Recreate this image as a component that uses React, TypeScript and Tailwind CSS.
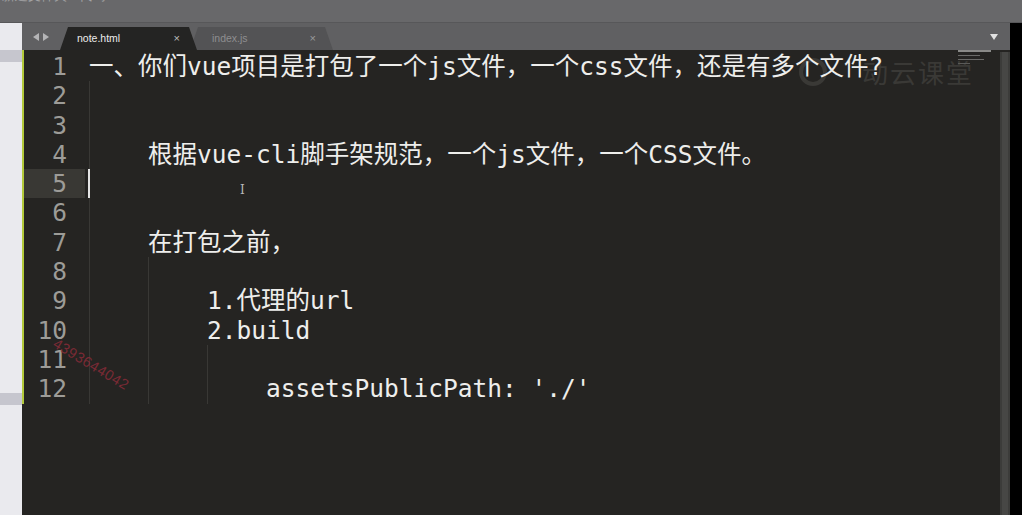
import React from "react";

type Line = { n: number; guides: number; text: string };

const lines: Line[] = [
  { n: 1, guides: 0, text: "一、你们vue项目是打包了一个js文件，一个css文件，还是有多个文件?" },
  { n: 2, guides: 1, text: "" },
  { n: 3, guides: 1, text: "" },
  { n: 4, guides: 1, text: "根据vue-cli脚手架规范，一个js文件，一个CSS文件。" },
  { n: 5, guides: 1, text: "" },
  { n: 6, guides: 1, text: "" },
  { n: 7, guides: 1, text: "在打包之前，" },
  { n: 8, guides: 2, text: "" },
  { n: 9, guides: 2, text: "1.代理的url" },
  { n: 10, guides: 2, text: "2.build" },
  { n: 11, guides: 3, text: "" },
  { n: 12, guides: 3, text: "assetsPublicPath: './'" },
];

function Row({ line }: { line: Line }) {
  const current = line.n === 5;
  return (
    <div className="flex h-[29.3px] leading-[29.3px]">
      <div className="w-[65px] shrink-0">
        <div
          className={`w-[61px] h-full pr-[18px] text-right text-[#9d9c98] ${
            current ? "bg-[#393834]" : ""
          }`}
        >
          {line.n}
        </div>
      </div>
      <div className="flex h-full">
        {Array.from({ length: line.guides }).map((_, i) => (
          <span
            key={i}
            className={`w-[59px] h-full shrink-0 ${
              current && i === 0
                ? "border-l-2 border-[#e4e4e4] -ml-[1px]"
                : "border-l border-[#393835]"
            }`}
          />
        ))}
        <span className="whitespace-pre text-[#eeeeec]">{line.text}</span>
      </div>
    </div>
  );
}

function Triangle({ dir }: { dir: "l" | "r" }) {
  return (
    <svg width="6" height="8" viewBox="0 0 6 8">
      <path d={dir === "l" ? "M6 0 L0 4 L6 8 Z" : "M0 0 L6 4 L0 8 Z"} fill="#b4b4b6" />
    </svg>
  );
}

export default function App() {
  return (
    <div className="w-[1022px] h-[515px] overflow-hidden flex flex-col bg-[#252422] font-['Liberation_Sans',sans-serif]">
      <div className="h-[23px] shrink-0 overflow-hidden bg-[#68686a] border-b border-[#575759]">
        <div className="-mt-[14px] pl-[2px] text-[13px] text-[#a3a3a5]">新建文件夹 · 代码</div>
      </div>

      <div className="flex flex-1 min-h-0">
        <aside className="w-[22px] shrink-0 flex flex-col bg-[#eaeaee]">
          <div className="h-[27px]" />
          <div className="h-[12px] bg-[#c6c6ce]" />
          <div className="h-[331px]" />
          <div className="h-[12px] bg-[#c6c6ce]" />
        </aside>

        <div className="flex-1 flex flex-col min-w-0">
          <div className="h-[27px] shrink-0 flex items-end bg-[#606062]">
            <div className="w-[38px] h-full flex items-center gap-[4px] pl-[11px]">
              <Triangle dir="l" />
              <Triangle dir="r" />
            </div>
            <div className="relative z-10 w-[137px] h-[23px] flex items-center justify-between pl-[17px] pr-[17px] bg-[#242423] [clip-path:polygon(8px_0,calc(100%-8px)_0,100%_100%,0_100%)]">
              <span className="text-[10.5px] font-medium text-[#ececec]">note.html</span>
              <span className="text-[11px] text-[#bdbdbd]">×</span>
            </div>
            <div className="-ml-[7px] w-[143px] h-[23px] flex items-center justify-between pl-[22px] pr-[17px] bg-[#535355] [clip-path:polygon(8px_0,calc(100%-8px)_0,100%_100%,0_100%)]">
              <span className="text-[10.5px] text-[#8e8e90]">index.js</span>
              <span className="text-[11px] text-[#9a9a9c]">×</span>
            </div>
            <div className="ml-auto mr-[12px] self-center pt-[1px]">
              <svg width="8" height="6" viewBox="0 0 8 6">
                <path d="M0 0 L8 0 L4 6 Z" fill="#e2e2e2" />
              </svg>
            </div>
          </div>

          <div className="relative flex-1 flex min-h-0">
            {/* watermark behind the text */}
            <div className="absolute left-[776px] top-[2px] flex items-center gap-[6px] text-[26px] tracking-[2px] text-[#3a3936] font-['Noto_Sans_CJK_SC',sans-serif] pointer-events-none">
              <svg width="30" height="30" viewBox="0 0 30 30">
                <circle cx="15" cy="15" r="12" fill="none" stroke="#3a3936" strokeWidth="4" />
              </svg>
              <span className="ml-[28px]">动云课堂</span>
            </div>

            <div className="relative flex-1 flex flex-col">
              <div className="border-l-2 border-[#b3ca3b] pt-[2px] font-['DejaVu_Sans_Mono','Noto_Sans_CJK_SC',monospace] text-[24.5px]">
                {lines.map((l) => (
                  <Row key={l.n} line={l} />
                ))}
              </div>
            </div>
            <div className="w-[10px] shrink-0 mt-[2px] bg-[#3c3c3a] flex justify-center">
              <div className="w-[6px] bg-[#474745]" />
            </div>

            <div className="absolute left-[936px] top-[0px] flex flex-col gap-[3px]">
              <div className="w-[33px] h-[2px] bg-[#8a8a88]" />
              <div className="w-[22px] h-[1px] bg-[#6a6a68]" />
              <div className="w-[26px] h-[1px] bg-[#6a6a68]" />
              <div className="w-[12px] h-[1px] bg-[#5a5a58]" />
            </div>
            <div className="absolute left-[218px] top-[131px] text-[12px] text-[#b9b9b9] font-['DejaVu_Serif',serif]">I</div>
            <div className="absolute left-[32px] top-[282px] rotate-[31deg] origin-left text-[14.5px] tracking-[0.5px] text-[#8e2c3a] opacity-80 font-['Liberation_Sans',sans-serif]">
              4393644042
            </div>
          </div>
        </div>

        <div className="w-[12px] shrink-0 bg-black" />
      </div>
    </div>
  );
}
